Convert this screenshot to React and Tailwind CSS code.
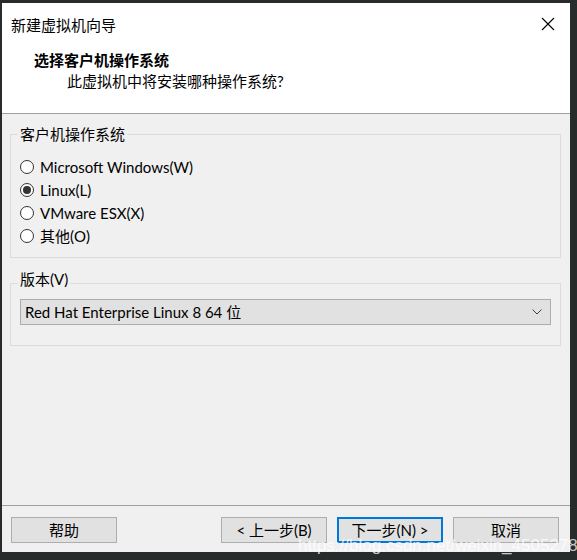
import { useState } from 'react'

const options = [
  { id: 'win', label: 'Microsoft Windows(W)' },
  { id: 'linux', label: 'Linux(L)' },
  { id: 'esx', label: 'VMware ESX(X)' },
  { id: 'other', label: '其他(O)' },
]

function Radio({ checked, label, onClick }) {
  return (
    <label onClick={onClick} className="flex items-center h-[23px] cursor-default">
      <span className="w-[14px] h-[14px] rounded-full border border-[#333] bg-white flex items-center justify-center">
        {checked && <span className="w-[8px] h-[8px] rounded-full bg-[#333]" />}
      </span>
      <span className="ml-[6px] leading-[18px]">{label}</span>
    </label>
  )
}

function Button({ children, focused }) {
  return (
    <button
      className={`w-[106px] h-[26px] bg-[#e1e1e1] leading-[18px] ${
        focused ? 'border-2 border-[#0078d7]' : 'border border-[#adadad]'
      }`}
    >
      {children}
    </button>
  )
}

export default function App() {
  const [os, setOs] = useState('linux')

  return (
    <div
      className="relative w-[577px] h-[560px] bg-[#282b2c] pl-[2px] pt-[3px] text-[15px] text-black"
      style={{ fontFamily: 'Lato, "Noto Sans CJK SC", sans-serif' }}
    >
      <div className="w-[568px] h-[549px] bg-[#f0f0f0] flex flex-col">
        {/* Header */}
        <div className="h-[111px] bg-white border-b border-[#a0a0a0] relative">
          <div className="flex items-center justify-between pt-[12px] pl-[9px] pr-[15px] h-[32px]">
            <span className="leading-[20px]">新建虚拟机向导</span>
            <svg width="14" height="14" viewBox="0 0 14 14" className="mt-[-2px]">
              <path d="M1 1 L13 13 M13 1 L1 13" stroke="#000" strokeWidth="1.1" />
            </svg>
          </div>
          <div className="pl-[32px] mt-[15px] font-bold leading-[20px]">选择客户机操作系统</div>
          <div className="pl-[65px] mt-[1px] leading-[20px]">此虚拟机中将安装哪种操作系统?</div>
        </div>

        {/* Body */}
        <div className="flex-1 px-[8px] pr-[9px]">
          <fieldset className="mt-[11px] border border-[#dcdcdc] pb-[10px]">
            <legend className="ml-[7px] px-[2px] leading-[18px]">客户机操作系统</legend>
            <div className="pt-[12px] pl-[9px] flex flex-col">
              {options.map((o) => (
                <Radio key={o.id} label={o.label} checked={os === o.id} onClick={() => setOs(o.id)} />
              ))}
            </div>
          </fieldset>

          <fieldset className="mt-[12px] border border-[#dcdcdc] pb-[20px]">
            <legend className="ml-[7px] px-[2px] leading-[18px] pb-[8px]">版本(V)</legend>
            <div className="mx-[9px] mt-[3px] h-[26px] bg-[#e1e1e1] border border-[#adadad] flex items-center justify-between pl-[4px] pr-[8px]">
              <span className="leading-[18px]">Red Hat Enterprise Linux 8 64 位</span>
              <svg width="10" height="6" viewBox="0 0 10 6">
                <path d="M0.5 0.5 L5 5 L9.5 0.5" fill="none" stroke="#404040" strokeWidth="1" />
              </svg>
            </div>
          </fieldset>
        </div>

        {/* Footer */}
        <div className="h-[47px] border-t border-[#a0a0a0] flex items-start justify-between pt-[11px] pl-[9px] pr-[11px]">
          <Button>帮助</Button>
          <div className="flex gap-[10px]">
            <Button>&lt; 上一步(B)</Button>
            <Button focused>下一步(N) &gt;</Button>
            <Button>取消</Button>
          </div>
        </div>
      </div>

      <div
        className="absolute left-[298px] top-[533px] text-[17px] text-white/75 pointer-events-none"
        style={{ fontFamily: '"Liberation Sans", sans-serif' }}
      >
        https://blog.csdn.net/weixin_45052781
      </div>
    </div>
  )
}
